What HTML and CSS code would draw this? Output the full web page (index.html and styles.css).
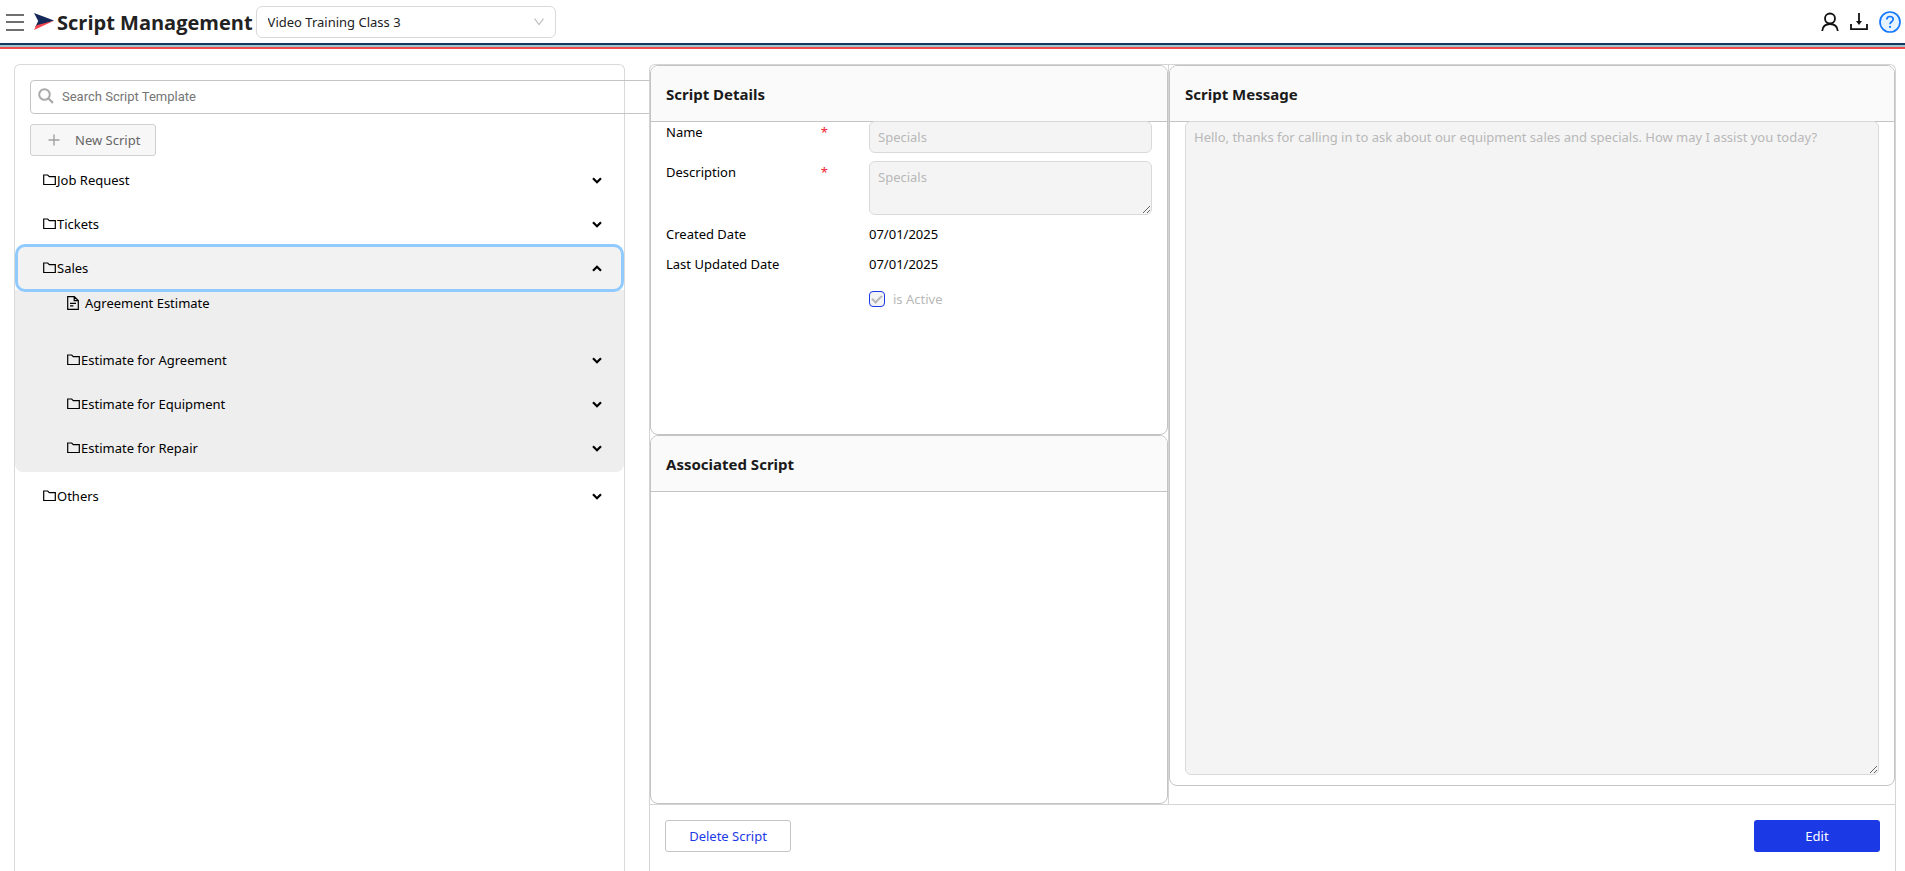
FILE: index.html
```html
<!DOCTYPE html>
<html lang="en">
<head>
    <meta charset="UTF-8">
    <meta name="viewport" content="width=device-width, initial-scale=1.0">
    <title>Script Management</title>
    <link rel="stylesheet" href="styles.css">
</head>
<body>
    <!-- Shared icons -->
    <svg class="icon-defs" aria-hidden="true">
        <symbol id="icon-folder" viewBox="0 0 13 12">
            <path d="M0.7 10.5V1h4l1.6 1.6h6v7.9z" fill="none" stroke="currentColor" stroke-width="1.2"/>
        </symbol>
        <symbol id="icon-file" viewBox="0 0 12 14">
            <path d="M0.7 0.7h6.6l4 3.8v8.8H0.7zM7.2 0.7v3.9h4M3 7.4h6M3 9.8h3.4" fill="none" stroke="currentColor" stroke-width="1.2"/>
        </symbol>
        <symbol id="icon-chevron" viewBox="0 0 10 7">
            <path d="M1 1.2l4 4 4-4" fill="none" stroke="currentColor" stroke-width="2.2"/>
        </symbol>
    </svg>

    <header class="topbar">
        <button class="menu-button" aria-label="Menu">
            <svg width="18" height="18" viewBox="0 0 18 18"><path d="M0 2h18M0 9h18M0 17h18" stroke="#707070" stroke-width="2"/></svg>
        </button>
        <svg class="logo" width="20" height="17" viewBox="0 0 20 17">
            <path d="M0 0l20 7.6L1 14.6L4.2 8z" fill="#14285a"/>
            <path d="M2.4 12.2L20 7.8 0 17z" fill="#f7434c"/>
        </svg>
        <h1>Script Management</h1>
        <div class="select-box">
            <select aria-label="Company">
                <option>Video Training Class 3</option>
            </select>
            <svg class="select-arrow" width="10" height="8" viewBox="0 0 10 8"><path d="M0.5 0.7L5 6.6l4.5-5.9" fill="none" stroke="#bfbfbf" stroke-width="1.2"/></svg>
        </div>
        <nav class="top-actions">
            <a href="#" aria-label="Account">
                <svg width="18" height="20" viewBox="0 0 18 20"><circle cx="9" cy="6.5" r="5" fill="none" stroke="#111" stroke-width="1.8"/><path d="M1.2 19c0.4-4 3-7 7.8-7s7.4 3 7.8 7" fill="none" stroke="#111" stroke-width="1.8"/></svg>
            </a>
            <a href="#" aria-label="Download">
                <svg width="18" height="18" viewBox="0 0 18 18"><path d="M9 0v10M1 11v5.2h16V11" fill="none" stroke="#111" stroke-width="1.8"/><path d="M6 8h6l-3 4z" fill="#111"/></svg>
            </a>
            <a href="#" aria-label="Help">
                <svg width="22" height="22" viewBox="0 0 22 22"><circle cx="11" cy="11" r="10" fill="#e6f4ff" stroke="#1677ff" stroke-width="1.7"/><path d="M7.8 8.6c0-2 1.4-3.1 3.2-3.1s3.2 1.1 3.2 2.8c0 2.4-3.2 2.5-3.2 4.9" fill="none" stroke="#1677ff" stroke-width="1.7"/><circle cx="11" cy="15.9" r="1.1" fill="#1677ff"/></svg>
            </a>
        </nav>
    </header>

    <main class="layout">
        <!-- Script tree -->
        <section class="sidebar">
            <div class="search-box">
                <svg width="16" height="16" viewBox="0 0 16 16"><circle cx="6.5" cy="6.5" r="5.3" fill="none" stroke="#aaa" stroke-width="2"/><path d="M10.3 10.3l4.6 4.6" stroke="#aaa" stroke-width="2.2"/></svg>
                <input type="text" placeholder="Search Script Template" aria-label="Search Script Template">
            </div>
            <button class="new-button">
                <svg width="12" height="12" viewBox="0 0 12 12"><path d="M6 0.5v11M0.5 6h11" stroke="#a0a0a0" stroke-width="1.4"/></svg>
                New Script
            </button>

            <div class="tree">
                <button class="tree-row">
                    <svg class="folder"><use href="#icon-folder"/></svg>Job Request
                    <svg class="chevron"><use href="#icon-chevron"/></svg>
                </button>
                <button class="tree-row">
                    <svg class="folder"><use href="#icon-folder"/></svg>Tickets
                    <svg class="chevron"><use href="#icon-chevron"/></svg>
                </button>
                <button class="tree-row focused" aria-expanded="true">
                    <svg class="folder"><use href="#icon-folder"/></svg>Sales
                    <svg class="chevron up"><use href="#icon-chevron"/></svg>
                </button>
                <div class="tree-children">
                    <a class="tree-leaf" href="#">
                        <svg class="file"><use href="#icon-file"/></svg>Agreement Estimate
                    </a>
                    <button class="tree-row">
                        <svg class="folder"><use href="#icon-folder"/></svg>Estimate for Agreement
                        <svg class="chevron"><use href="#icon-chevron"/></svg>
                    </button>
                    <button class="tree-row">
                        <svg class="folder"><use href="#icon-folder"/></svg>Estimate for Equipment
                        <svg class="chevron"><use href="#icon-chevron"/></svg>
                    </button>
                    <button class="tree-row">
                        <svg class="folder"><use href="#icon-folder"/></svg>Estimate for Repair
                        <svg class="chevron"><use href="#icon-chevron"/></svg>
                    </button>
                </div>
                <button class="tree-row">
                    <svg class="folder"><use href="#icon-folder"/></svg>Others
                    <svg class="chevron"><use href="#icon-chevron"/></svg>
                </button>
            </div>
        </section>

        <!-- Selected script -->
        <section class="content">
            <div class="columns">
                <div class="column-left">
                    <div class="card">
                        <h2>Script Details</h2>
                        <form class="details">
                            <label for="name">Name <span class="required">*</span></label>
                            <input class="field" id="name" type="text" value="Specials" disabled>
                            <label for="description">Description <span class="required">*</span></label>
                            <textarea class="field" id="description" disabled>Specials</textarea>
                            <span>Created Date</span>
                            <span>07/01/2025</span>
                            <span>Last Updated Date</span>
                            <span>07/01/2025</span>
                            <label class="active-check">
                                <input type="checkbox" checked disabled>
                                is Active
                            </label>
                        </form>
                    </div>
                    <div class="card">
                        <h2>Associated Script</h2>
                    </div>
                </div>
                <div class="card message-card">
                    <h2 id="message-title">Script Message</h2>
                    <div class="message-body">
                        <textarea class="field" aria-labelledby="message-title" disabled>Hello, thanks for calling in to ask about our equipment sales and specials. How may I assist you today?</textarea>
                    </div>
                </div>
            </div>
            <footer class="actions">
                <button class="delete-button">Delete Script</button>
                <button class="edit-button">Edit</button>
            </footer>
        </section>
    </main>
</body>
</html>
```
FILE: styles.css
```css
* {
    box-sizing: border-box;
}

body {
    margin: 0;
    height: 100vh;
    display: flex;
    flex-direction: column;
    overflow: hidden;
    background-color: #fff;
    color: #000;
    font-family: "Noto Sans", "Open Sans", sans-serif;
    font-size: 13px;
    line-height: 22px;
}

button,
input,
select,
textarea {
    font: inherit;
    color: inherit;
}

button {
    cursor: pointer;
}

svg {
    display: block;
    flex: none;
}

.icon-defs {
    position: absolute;
    width: 0;
    height: 0;
}

/* Top bar */
.topbar {
    display: flex;
    align-items: center;
    height: 49px;
    padding: 0 4px 0 6px;
    border-bottom: 2px solid #f5474f;
    box-shadow: inset 0 -2px #9fc5cd, inset 0 -4px #17365f;
}

.topbar > * {
    margin-bottom: 4px;
}

.menu-button {
    padding: 0;
    border: none;
    background: none;
}

.logo {
    margin-left: 10px;
}

.topbar h1 {
    margin: 0 3px 2px;
    color: #222;
    font-family: "Open Sans", sans-serif;
    font-size: 20px;
    line-height: 28px;
    white-space: nowrap;
}

.select-box {
    position: relative;
    width: 300px;
}

.select-box select {
    display: block;
    width: 100%;
    height: 32px;
    padding: 0 11px;
    border: 1px solid #d9d9d9;
    border-radius: 6px;
    background-color: #fff;
    color: #222;
    appearance: none;
}

.select-arrow {
    position: absolute;
    top: 12px;
    right: 12px;
    pointer-events: none;
}

.top-actions {
    display: flex;
    align-items: center;
    gap: 11px;
    margin-left: auto;
}

/* Page layout */
.layout {
    flex: 1;
    display: grid;
    grid-template-columns: 611fr 1247fr;
    column-gap: 24px;
    min-height: 0;
    padding: 15px 9px 0 14px;
}

.sidebar {
    min-width: 0;
    border: 1px solid #d9d9d9;
    border-bottom: none;
    border-radius: 6px 6px 0 0;
}

.content {
    position: relative;
    min-width: 0;
    display: flex;
    flex-direction: column;
    border: 1px solid #d4d4d4;
    border-bottom: none;
    border-radius: 6px 6px 0 0;
    background-color: #fff;
}

/* Script tree */
.search-box {
    display: flex;
    gap: 8px;
    height: 34px;
    margin: 15px -40px 0 15px;
    padding: 7px;
    border: 1px solid #c4c4c4;
    border-radius: 4px;
}

.search-box input {
    flex: 1;
    padding: 0;
    border: none;
    outline: none;
    background: none;
    font-family: Roboto, sans-serif;
}

.search-box input::placeholder {
    color: #757575;
}

.new-button {
    display: flex;
    align-items: center;
    gap: 15px;
    width: 126px;
    height: 32px;
    margin: 10px 15px 2px;
    padding: 0 17px;
    border: 1px solid #d0d0d0;
    border-radius: 3px;
    background-color: #f7f7f7;
    color: #666;
    white-space: nowrap;
}

.tree-row {
    display: flex;
    align-items: center;
    width: 100%;
    height: 44px;
    padding: 0 22px 0 28px;
    border: none;
    background: none;
    text-align: left;
}

.tree-row.focused {
    position: relative;
    width: auto;
    margin: 0 2px;
    padding: 0 20px 0 26px;
    border-radius: 8px;
    outline: 3px solid #91caff;
    outline-offset: -1px;
    background-color: #f2f2f2;
}

.tree {
    display: flex;
    flex-direction: column;
}

.tree-children {
    margin-bottom: 2px;
    padding-bottom: 2px;
    border-radius: 0 0 8px 8px;
    background-color: #eee;
}

.tree-children .tree-row,
.tree-leaf {
    padding-left: 52px;
}

.tree-leaf {
    display: flex;
    gap: 6px;
    padding-top: 2px;
    padding-bottom: 24px;
    color: #000;
    text-decoration: none;
}

.folder {
    width: 13px;
    height: 12px;
    margin-right: 1px;
}

.file {
    width: 12px;
    height: 14px;
    margin-top: 4px;
}

.chevron {
    width: 10px;
    height: 7px;
    margin-left: auto;
}

.chevron.up {
    transform: rotate(180deg);
}

/* Cards */
.columns {
    flex: 1;
    display: grid;
    grid-template-columns: 519fr 726fr;
    min-height: 0;
}

.column-left {
    display: flex;
    flex-direction: column;
    border-right: 1px solid #d4d4d4;
}

.card {
    flex: 1;
    min-height: 0;
    border: 1px solid #c4c4c4;
    border-radius: 8px;
    overflow: hidden;
}

.card h2 {
    margin: 0;
    padding: 17px 15px 16px;
    border-bottom: 1px solid #c4c4c4;
    background-color: #fafafa;
    color: #1a1a1a;
    font-size: 15px;
    line-height: 22px;
}

.message-card {
    display: flex;
    flex-direction: column;
    margin-bottom: 18px;
}

.message-body {
    flex: 1;
    display: flex;
    margin-top: -1px;
    padding: 0 15px 10px;
}

.field {
    display: block;
    width: 100%;
    padding: 4px 8px;
    border: 1px solid #d9d9d9;
    border-radius: 6px;
    background-color: #f4f4f4;
    color: #b8b8b8;
}

.details {
    display: grid;
    grid-template-columns: 203px 1fr;
    row-gap: 8px;
    margin-top: -1px;
    padding: 0 15px;
}

.details label {
    display: flex;
    justify-content: space-between;
    height: 22px;
    padding-right: 41px;
}

.details textarea {
    height: 54px;
}

.required {
    color: #f5222d;
}

.details .active-check {
    grid-column: 2;
    justify-content: flex-start;
    align-items: center;
    gap: 8px;
    margin-top: 5px;
    color: #b8b8b8;
}

.active-check input {
    width: 16px;
    height: 16px;
    margin: 0;
    border: 1px solid #1c39e6;
    border-radius: 4px;
    background-color: #f4f4f4;
    appearance: none;
}

.active-check input:checked::before {
    content: "";
    display: block;
    box-sizing: border-box;
    width: 6px;
    height: 10px;
    margin: 1px 0 0 4px;
    border: solid #b8b8b8;
    border-width: 0 2px 2px 0;
    transform: rotate(45deg);
}

/* Footer buttons */
.actions {
    display: flex;
    justify-content: space-between;
    padding: 15px 15px 19px;
    border-top: 1px solid #d4d4d4;
}

.actions button {
    width: 126px;
    height: 32px;
    border-radius: 3px;
}

.delete-button {
    border: 1px solid #c4c4c4;
    background-color: #fff;
    color: #1c39e6;
}

.actions .edit-button {
    border: none;
    background-color: #1c39e6;
    color: #fff;
}
```
